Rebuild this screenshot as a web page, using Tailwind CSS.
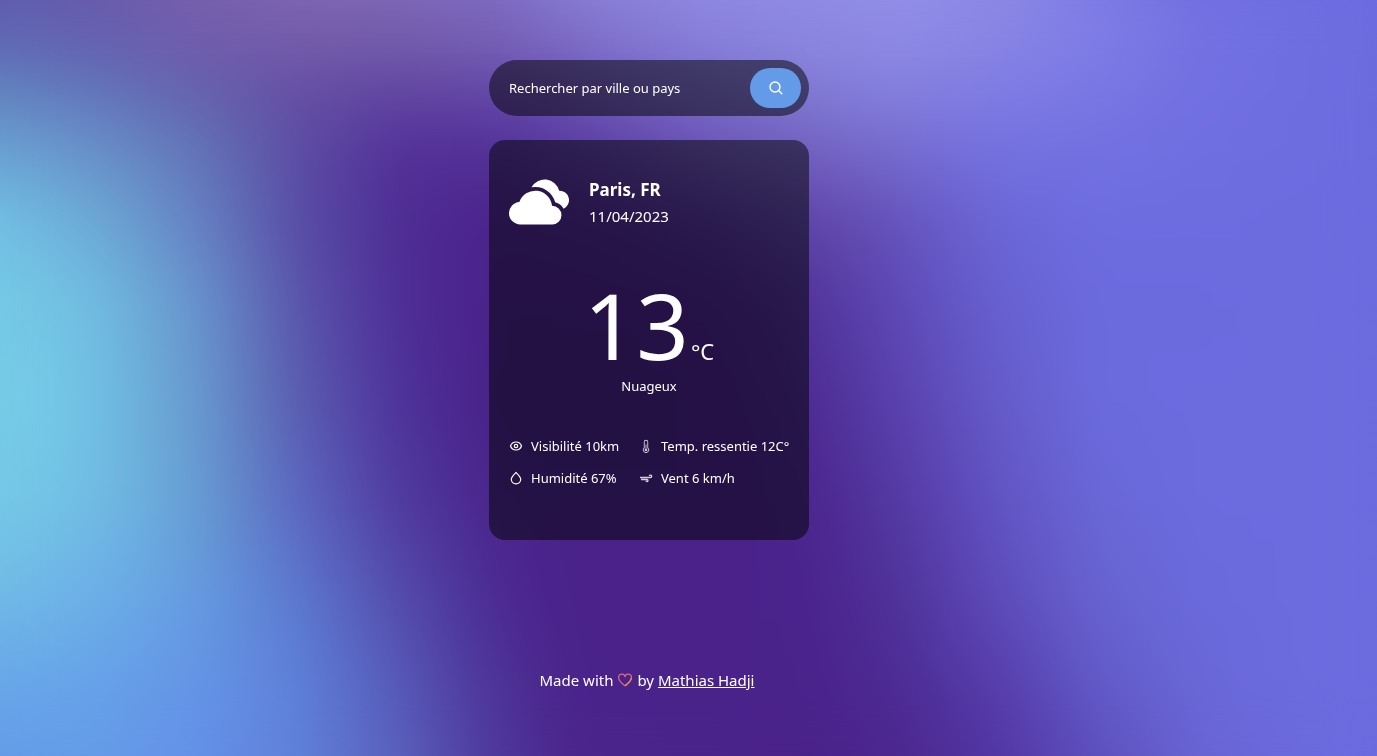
<!DOCTYPE html>
<html lang="fr">
<head>
<meta charset="utf-8">
<meta name="viewport" content="width=device-width, initial-scale=1">
<title>Météo</title>
<script src="https://cdn.jsdelivr.net/npm/@tailwindcss/browser@4"></script>
</head>
<body class="relative isolate min-h-screen bg-[#4a228a] font-['Noto_Sans','Open_Sans',sans-serif] text-white">

<!-- Mesh gradient: one horizontal gradient per row, each faded in from the row above -->
<div class="absolute inset-0 -z-10" aria-hidden="true">
  <div class="absolute inset-0 bg-[linear-gradient(to_right,#5f5cb0_0px,#6a5cab_100px,#7860ac_200px,#7f66b4_300px,#7f68b8_400px,#7e6cc4_490px,#8a80d8_600px,#9088e2_700px,#908ce6_800px,#918fe8_900px,#8c8ae6_1000px,#7d7be4_1100px,#7270e2_1200px,#6d6ce0_1377px)]"></div>
  <div class="absolute inset-0 bg-[linear-gradient(to_right,#5f68b4_0px,#655fb0_100px,#705dac_200px,#755da9_300px,#745da9_400px,#7660b4_500px,#8072cc_600px,#8780d8_700px,#8b86de_800px,#8e8ae4_900px,#8884e4_1000px,#7f7de6_1100px,#7472e2_1200px,#6c6cdf_1377px)] mask-[linear-gradient(transparent_0px,black_40px)]"></div>
  <div class="absolute inset-0 bg-[linear-gradient(to_right,#6284be_0px,#6274ba_100px,#6660ac_200px,#654ea4_300px,#6246a2_400px,#6448a8_500px,#705abc_600px,#7a6cca_700px,#807bd4_810px,#8480de_900px,#7f7ce4_1000px,#7977e3_1100px,#7270e2_1200px,#6c6cdf_1377px)] mask-[linear-gradient(transparent_40px,black_90px)]"></div>
  <div class="absolute inset-0 bg-[linear-gradient(to_right,#6aa2d4_0px,#688fc8_100px,#6274b6_200px,#5c4ca4_300px,#533098_400px,#523096_500px,#5c40a4_600px,#6a54b4_700px,#7462c0_810px,#766cd0_900px,#7472e0_1000px,#7371e2_1100px,#706fe1_1200px,#6c6cdf_1377px)] mask-[linear-gradient(transparent_90px,black_150px)]"></div>
  <div class="absolute inset-0 bg-[linear-gradient(to_right,#72c0e4_0px,#6ba8d6_100px,#6680c2_200px,#584ca6_300px,#4e2d93_400px,#4b248c_480px,#4d288f_600px,#54369c_720px,#5f46a8_810px,#6654bc_900px,#6b67d8_1000px,#6e6de0_1100px,#6c6cdf_1377px)] mask-[linear-gradient(transparent_150px,black_220px)]"></div>
  <div class="absolute inset-0 bg-[linear-gradient(to_right,#76cbe6_0px,#70bbe0_100px,#6792cc_200px,#5a54aa_300px,#4e2e96_400px,#4a228a_490px,#4a228a_620px,#4b248c_720px,#53349c_810px,#5e4ab6_900px,#6761d2_1000px,#6c6bde_1100px,#6c6cdf_1377px)] mask-[linear-gradient(transparent_220px,black_300px)]"></div>
  <div class="absolute inset-0 bg-[linear-gradient(to_right,#76cbe6_0px,#76cbe6_40px,#70bee4_100px,#6898ce_200px,#5a5cb0_300px,#4e329a_400px,#482288_490px,#4a228a_740px,#4e2c94_810px,#5a42ae_900px,#655cca_1000px,#6c6bde_1100px,#6c6cdf_1200px)] mask-[linear-gradient(transparent_300px,black_400px)]"></div>
  <div class="absolute inset-0 bg-[linear-gradient(to_right,#76cae6_0px,#70bce4_100px,#669cd2_200px,#5c66c0_300px,#503a9e_400px,#4a268c_490px,#4a228a_560px,#4a228a_740px,#4b268e_810px,#553aa4_900px,#6254c4_1000px,#6a68d8_1100px,#6c6cdf_1200px)] mask-[linear-gradient(transparent_400px,black_500px)]"></div>
  <div class="absolute inset-0 bg-[linear-gradient(to_right,#70bae6_0px,#6caee8_100px,#649ae0_200px,#5c78d0_300px,#544cac_400px,#4c2c94_490px,#4a228a_560px,#4a228a_740px,#4a248c_810px,#50329a_900px,#5d4cba_1000px,#6763d0_1100px,#6b6adc_1200px,#6c6cdf_1300px)] mask-[linear-gradient(transparent_500px,black_600px)]"></div>
  <div class="absolute inset-0 bg-[linear-gradient(to_right,#69a8e8_0px,#66a2e8_100px,#6494e6_200px,#5e80d8_300px,#5658b8_400px,#4e3498_490px,#4a238a_570px,#4a238a_810px,#4d2c96_900px,#573fac_1000px,#625bca_1100px,#6a68d8_1200px,#6c6cdf_1300px)] mask-[linear-gradient(transparent_600px,black_680px)]"></div>
  <div class="absolute inset-0 bg-[linear-gradient(to_right,#649ce8_0px,#649be8_100px,#6490e8_200px,#6080d8_300px,#5a60bc_400px,#503a9e_490px,#4b268c_570px,#4a228a_810px,#4c288e_900px,#5336a4_1000px,#5d50bc_1100px,#6964d4_1200px,#6c6cdf_1340px)] mask-[linear-gradient(transparent_680px,black_756px)]"></div>
  <!-- Softens the seams between rows -->
  <div class="absolute inset-0 backdrop-blur-xl"></div>
</div>

<div class="flex min-h-screen flex-col items-center pt-[60px] pr-[79px]">
  <form class="flex h-14 w-80 items-center rounded-full bg-black/50 pr-2 pl-5" onsubmit="return false">
    <input type="text" aria-label="Rechercher par ville ou pays" placeholder="Rechercher par ville ou pays" class="min-w-0 flex-1 bg-transparent text-[13px] leading-5 outline-none placeholder:text-white">
    <button type="submit" aria-label="Rechercher" class="flex h-10 w-[51px] items-center justify-center rounded-full bg-[#649be8]">
      <svg class="size-4" viewBox="0 0 16 16" fill="none" stroke="currentColor" stroke-width="1.400" stroke-linecap="round"><circle cx="7" cy="7" r="5"/><path d="m10.800 10.800 3 3"/></svg>
    </button>
  </form>

  <main class="mt-6 flex h-[400px] w-80 flex-col rounded-2xl bg-black/50 px-5 pt-8">
    <div class="flex items-center gap-5">
      <svg class="size-[60px]" viewBox="0 0 16 16" fill="currentColor" aria-hidden="true"><path d="M11.473 9a4.5 4.5 0 0 0-8.72-.99A3 3 0 0 0 3 14h8.5a2.5 2.5 0 1 0-.027-5z"/><path d="M14.544 9.772a3.506 3.506 0 0 0-2.225-1.676 5.502 5.502 0 0 0-6.337-4.002 4.002 4.002 0 0 1 7.392.91 2.5 2.5 0 0 1 1.17 4.769z"/></svg>
      <div>
        <h1 class="text-[17px] leading-7 font-bold">Paris, FR</h1>
        <p class="text-[15px] leading-6">11/04/2023</p>
      </div>
    </div>
    <div class="mt-11 text-center">
      <p class="flex items-baseline justify-center gap-0.5"><span class="text-[92px] leading-[98px]">13</span><span class="text-[22px] leading-none">°C</span></p>
      <p class="mt-0.5 text-[13px] leading-5">Nuageux</p>
    </div>
    <ul class="mt-10 grid grid-cols-[130px_1fr] gap-y-3 text-[13px] leading-5 whitespace-nowrap">
      <li class="flex items-center gap-2"><svg class="size-3.5" viewBox="0 0 14 14" fill="none" stroke="currentColor" stroke-width="1.200"><path d="M1.500 7C2.500 4.200 4.500 3 7 3s4.500 1.200 5.500 4C11.500 9.800 9.500 11 7 11S2.500 9.800 1.500 7z"/><circle cx="7" cy="7" r="1.700"/></svg>Visibilité 10km</li>
      <li class="flex items-center gap-2"><svg class="size-3.5 opacity-80" viewBox="0 0 16 16" fill="currentColor"><path d="M9.500 12.500a1.500 1.500 0 1 1-2-1.415V6.500a.5.5 0 0 1 1 0v4.585a1.500 1.500 0 0 1 1 1.415z"/><path d="M5.500 3.500a2.500 2.500 0 0 1 5 0v6.550a3.500 3.500 0 1 1-5 0V3.500zM8 2a1.500 1.500 0 0 0-1.500 1.500v6.987l-.167.150a2.500 2.500 0 1 0 3.333 0l-.166-.150V3.500A1.500 1.500 0 0 0 8 2z"/></svg>Temp. ressentie 12C°</li>
      <li class="flex items-center gap-2"><svg class="size-3.5" viewBox="0 0 14 14" fill="none" stroke="currentColor" stroke-width="1.200" stroke-linejoin="round"><path d="M7 1.500C9.500 4 11.700 6 11.700 8.300a4.700 4.500 0 0 1-9.400 0C2.300 6 4.500 4 7 1.500z"/></svg>Humidité 67%</li>
      <li class="flex items-center gap-2"><svg class="size-3.5 opacity-80" viewBox="0 0 14 14" fill="none" stroke="currentColor" stroke-width="1.300"><path d="M1 6.500h10.500a1.200 1.200 0 1 0-1.200-1.500M2 8.500h6a1 1 0 1 1-1 1.200"/></svg>Vent 6 km/h</li>
    </ul>
  </main>

  <footer class="mt-32 flex items-center gap-[5px] pr-1 text-[15px] leading-6">
    <span>Made with</span>
    <svg class="size-3.5 text-[#dc6a78]" viewBox="0 0 14 14" fill="none" stroke="currentColor" stroke-width="1.200" stroke-linejoin="round" role="img" aria-label="amour"><path d="M7 12.800C4 10.500.7 8.300.7 5a3.200 3.200 0 0 1 6.300-1.400A3.200 3.200 0 0 1 13.300 5C13.300 8.300 10 10.500 7 12.800z"/><path d="M13.300 5C13.300 8.300 10 10.500 7 12.800" stroke="#ee9a45"/></svg>
    <span>by <a href="#" class="underline">Mathias Hadji</a></span>
  </footer>
</div>
</body>
</html>
